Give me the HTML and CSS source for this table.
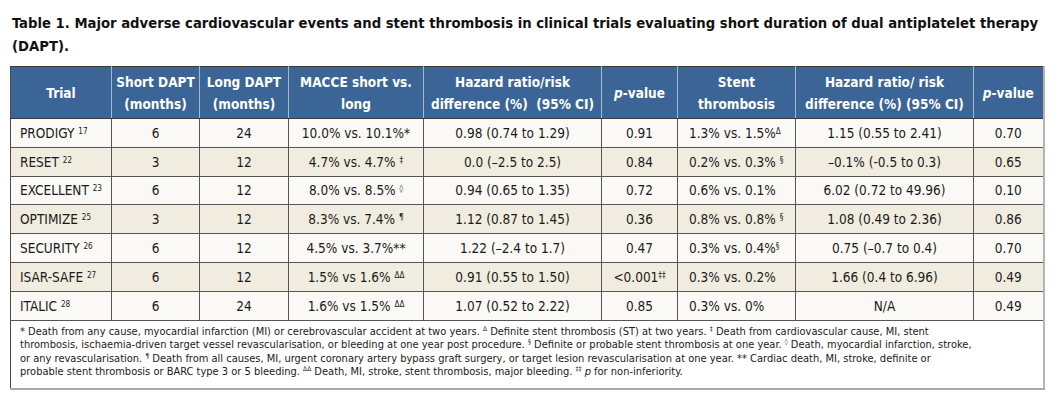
FILE: index.html
```html
<!DOCTYPE html>
<html lang="en">
<head>
<meta charset="utf-8">
<title>Table 1. DAPT</title>
<link rel="stylesheet" href="styles.css">
</head>
<body>
<div class="page">
  <h1 class="title">Table 1. Major adverse cardiovascular events and stent thrombosis in clinical trials evaluating short duration of dual antiplatelet therapy<br>(DAPT).</h1>
  <table class="dapt">
    <colgroup>
      <col class="c-trial"><col class="c-short"><col class="c-long"><col class="c-macce"><col class="c-hr1"><col class="c-p1"><col class="c-st"><col class="c-hr2"><col class="c-p2">
    </colgroup>
    <thead>
      <tr>
        <th>Trial</th>
        <th>Short DAPT<br>(months)</th>
        <th>Long DAPT<br>(months)</th>
        <th>MACCE short vs.<br>long</th>
        <th>Hazard ratio/risk<br>difference (%)&nbsp; (95% CI)</th>
        <th><i>p</i>-value</th>
        <th>Stent<br>thrombosis</th>
        <th>Hazard ratio/ risk<br>difference (%) (95% CI)</th>
        <th><i>p</i>-value</th>
      </tr>
    </thead>
    <tbody>
      <tr class="odd">
        <td class="trial">PRODIGY <sup>17</sup></td><td>6</td><td>24</td><td>10.0% vs. 10.1%*</td><td>0.98 (0.74 to 1.29)</td><td>0.91</td><td class="left">1.3% vs. 1.5%<sup>Δ</sup></td><td>1.15 (0.55 to 2.41)</td><td>0.70</td>
      </tr>
      <tr class="even">
        <td class="trial">RESET <sup>22</sup></td><td>3</td><td>12</td><td>4.7% vs. 4.7% <sup>‡</sup></td><td>0.0 (–2.5 to 2.5)</td><td>0.84</td><td class="left">0.2% vs. 0.3% <sup>§</sup></td><td>–0.1% (-0.5 to 0.3)</td><td>0.65</td>
      </tr>
      <tr class="odd">
        <td class="trial">EXCELLENT <sup>23</sup></td><td>6</td><td>12</td><td>8.0% vs. 8.5% <sup>◊</sup></td><td>0.94 (0.65 to 1.35)</td><td>0.72</td><td class="left">0.6% vs. 0.1%</td><td>6.02 (0.72 to 49.96)</td><td>0.10</td>
      </tr>
      <tr class="even">
        <td class="trial">OPTIMIZE <sup>25</sup></td><td>3</td><td>12</td><td>8.3% vs. 7.4% <sup>¶</sup></td><td>1.12 (0.87 to 1.45)</td><td>0.36</td><td class="left">0.8% vs. 0.8% <sup>§</sup></td><td>1.08 (0.49 to 2.36)</td><td>0.86</td>
      </tr>
      <tr class="odd">
        <td class="trial">SECURITY <sup>26</sup></td><td>6</td><td>12</td><td>4.5% vs. 3.7%**</td><td>1.22 (–2.4 to 1.7)</td><td>0.47</td><td class="left">0.3% vs. 0.4%<sup>§</sup></td><td>0.75 (–0.7 to 0.4)</td><td>0.70</td>
      </tr>
      <tr class="even">
        <td class="trial">ISAR-SAFE <sup>27</sup></td><td>6</td><td>12</td><td>1.5% vs 1.6% <sup>ΔΔ</sup></td><td>0.91 (0.55 to 1.50)</td><td>&lt;0.001<sup>‡‡</sup></td><td class="left">0.3% vs. 0.2%</td><td>1.66 (0.4 to 6.96)</td><td>0.49</td>
      </tr>
      <tr class="odd">
        <td class="trial">ITALIC <sup>28</sup></td><td>6</td><td>24</td><td>1.6% vs 1.5% <sup>ΔΔ</sup></td><td>1.07 (0.52 to 2.22)</td><td>0.85</td><td class="left">0.3% vs. 0%</td><td>N/A</td><td>0.49</td>
      </tr>
    </tbody>
    <tfoot>
      <tr>
        <td colspan="9" class="notes">* Death from any cause, myocardial infarction (MI) or cerebrovascular accident at two years. <sup>Δ</sup> Definite stent thrombosis (ST) at two years. <sup>‡</sup> Death from cardiovascular cause, MI, stent<br>thrombosis, ischaemia-driven target vessel revascularisation, or bleeding at one year post procedure. <sup>§</sup> Definite or probable stent thrombosis at one year. <sup>◊</sup> Death, myocardial infarction, stroke,<br>or any revascularisation. <sup>¶</sup> Death from all causes, MI, urgent coronary artery bypass graft surgery, or target lesion revascularisation at one year. ** Cardiac death, MI, stroke, definite or<br>probable stent thrombosis or BARC type 3 or 5 bleeding. <sup>ΔΔ</sup> Death, MI, stroke, stent thrombosis, major bleeding. <sup>‡‡</sup> <i>p</i> for non-inferiority.</td>
      </tr>
    </tfoot>
  </table>
</div>
</body>
</html>
```

FILE: styles.css
```css
html, body {
  margin: 0;
  padding: 0;
  background: #ffffff;
}

.page {
  padding: 11px 0 0 10px;
  font-family: "DejaVu Sans Condensed", "DejaVu Sans", "Liberation Sans", sans-serif;
  font-stretch: condensed;
  color: #1a1a1a;
}

.title {
  margin: 0 0 9px 2px;
  font-size: 14.7px;
  line-height: 23px;
  font-weight: bold;
  color: #111;
  white-space: nowrap;
}

.dapt {
  border-collapse: collapse;
  table-layout: fixed;
  width: 1033px;
  border-left: 1px solid #4a4a4a;
  border-top: 1px solid #3a3a3a;
  border-right: 2px solid #b4b4b4;
  border-bottom: 2px solid #a8a8a8;
}

.c-trial { width: 101px; }
.c-short { width: 88px; }
.c-long { width: 89px; }
.c-macce { width: 135px; }
.c-hr1 { width: 178px; }
.c-p1 { width: 76px; }
.c-st { width: 118px; }
.c-hr2 { width: 178px; }
.c-p2 { width: 70px; }

.dapt th {
  background: #3b6596;
  color: #ffffff;
  font-size: 13.5px;
  line-height: 22px;
  font-weight: bold;
  height: 51px;
  padding: 0 2px;
  text-align: center;
  vertical-align: middle;
  white-space: nowrap;
  border-left: 1px solid #a8b8cc;
  border-bottom: 1px solid #3a3a3a;
}

.dapt th:first-child {
  border-left: 0;
}

.dapt td {
  font-size: 13.5px;
  line-height: 18px;
  height: 27.8px;
  padding: 0 4px;
  text-align: center;
  vertical-align: middle;
  border-left: 1px solid #555;
  border-bottom: 1px solid #555;
  white-space: nowrap;
}

.dapt td:first-child {
  border-left: 0;
}

.dapt tr.odd td {
  background: #faf9f5;
}

.dapt tr.even td {
  background: #f0ede0;
}

.dapt td.trial {
  text-align: left;
  padding-left: 9px;
}

.dapt td.left {
  text-align: left;
  padding-left: 11px;
}

.dapt sup {
  font-size: 0.6em;
  line-height: 0;
  vertical-align: 0.55em;
}

.dapt tfoot td.notes {
  background: #ffffff;
  height: auto;
  text-align: left;
  font-size: 11px;
  line-height: 13.5px;
  padding: 4px 9px 9px 9px;
  white-space: nowrap;
  border-bottom: 0;
}
```
